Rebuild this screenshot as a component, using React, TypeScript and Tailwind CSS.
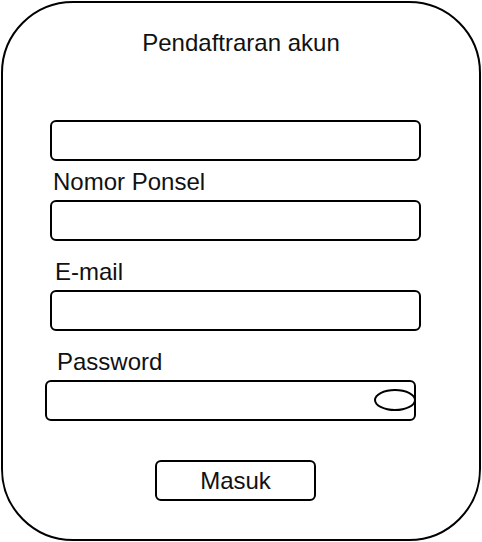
export default function App() {
  return (
    <div className="w-[482px] h-[542px] bg-white p-[1px]" style={{ fontFamily: '"Liberation Sans", Arial, sans-serif' }}>
      <div className="w-[480px] h-[540px] border-2 border-black rounded-[72px] flex flex-col items-start text-[24px] leading-[28px] text-[#111]">
        {/* Title */}
        <div className="mt-[26px] w-full text-center">Pendaftraran akun</div>

        <div className="mt-[63px] ml-[47px] w-[371px] h-[41px] border-2 border-black rounded-[6px]" />

        <div className="mt-[7px] ml-[50px]">Nomor Ponsel</div>
        <div className="mt-[4px] ml-[47px] w-[371px] h-[41px] border-2 border-black rounded-[6px]" />

        <div className="mt-[17px] ml-[52px]">E-mail</div>
        <div className="mt-[4px] ml-[47px] w-[371px] h-[41px] border-2 border-black rounded-[6px]" />

        <div className="mt-[17px] ml-[54px]">Password</div>
        <div className="relative mt-[4px] ml-[42px] w-[371px] h-[41px] border-2 border-black rounded-[6px]">
          <div className="absolute right-[-2px] top-[7px] w-[42px] h-[22px] rounded-[50%] border-2 border-black bg-white" />
        </div>

        <button className="mt-[39px] ml-[152px] w-[161px] h-[41px] border-2 border-black rounded-[6px] bg-white text-[24px] leading-[28px] text-[#111]">
          Masuk
        </button>
      </div>
    </div>
  );
}
